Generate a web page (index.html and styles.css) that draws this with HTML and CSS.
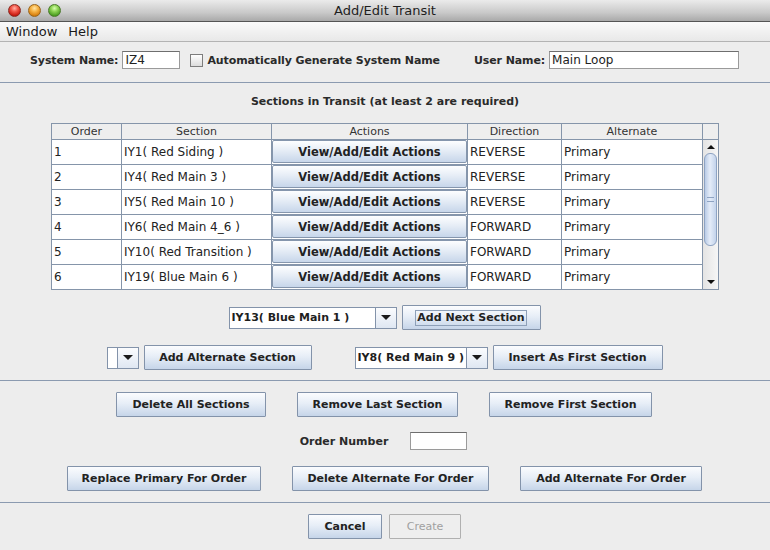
FILE: index.html
```html
<!DOCTYPE html>
<html>
<head>
<meta charset="utf-8">
<title>Add/Edit Transit</title>
<link rel="stylesheet" href="styles.css">
</head>
<body>
<div class="window">
  <div class="titlebar">
    <div class="lights">
      <span class="light red"></span>
      <span class="light yellow"></span>
      <span class="light green"></span>
    </div>
    <div class="title">Add/Edit Transit</div>
  </div>
  <div class="menubar">
    <span class="menu">Window</span>
    <span class="menu">Help</span>
  </div>

  <div class="row row-names">
    <span class="label tight">System Name:</span>
    <span class="field w-sys">IZ4</span>
    <span class="check"></span>
    <span class="label tight">Automatically Generate System Name</span>
    <span class="label tight user-label">User Name:</span>
    <span class="field w-user">Main Loop</span>
  </div>

  <div class="sep sep1"></div>

  <div class="heading">Sections in Transit (at least 2 are required)</div>

  <div class="table">
    <div class="grid">
      <div class="hcell">Order</div>
      <div class="hcell">Section</div>
      <div class="hcell">Actions</div>
      <div class="hcell">Direction</div>
      <div class="hcell">Alternate</div>

      <div class="cell">1</div><div class="cell">IY1( Red Siding )</div><div class="cell act"><span class="abtn">View/Add/Edit Actions</span></div><div class="cell">REVERSE</div><div class="cell">Primary</div>
      <div class="cell">2</div><div class="cell">IY4( Red Main 3 )</div><div class="cell act"><span class="abtn">View/Add/Edit Actions</span></div><div class="cell">REVERSE</div><div class="cell">Primary</div>
      <div class="cell">3</div><div class="cell">IY5( Red Main 10 )</div><div class="cell act"><span class="abtn">View/Add/Edit Actions</span></div><div class="cell">REVERSE</div><div class="cell">Primary</div>
      <div class="cell">4</div><div class="cell">IY6( Red Main 4_6 )</div><div class="cell act"><span class="abtn">View/Add/Edit Actions</span></div><div class="cell">FORWARD</div><div class="cell">Primary</div>
      <div class="cell">5</div><div class="cell">IY10( Red Transition )</div><div class="cell act"><span class="abtn">View/Add/Edit Actions</span></div><div class="cell">FORWARD</div><div class="cell">Primary</div>
      <div class="cell">6</div><div class="cell">IY19( Blue Main 6 )</div><div class="cell act"><span class="abtn">View/Add/Edit Actions</span></div><div class="cell">FORWARD</div><div class="cell">Primary</div>
    </div>
    <div class="scrollcol">
      <div class="hcell scroll-head"></div>
      <div class="track">
        <div class="arrow up"></div>
        <div class="thumb"><span class="grip"></span></div>
        <div class="arrow down"></div>
      </div>
    </div>
  </div>

  <div class="row row-add">
    <span class="combo w-c1"><span class="ctext">IY13( Blue Main 1 )</span><span class="carrow"></span></span>
    <span class="btn w-next"><span class="focus">Add Next Section</span></span>
  </div>

  <div class="row row-alt">
    <span class="combo w-c0"><span class="ctext"></span><span class="carrow"></span></span>
    <span class="btn w-alt">Add Alternate Section</span>
    <span class="combo w-c2 gap-big"><span class="ctext">IY8( Red Main 9 )</span><span class="carrow"></span></span>
    <span class="btn w-first">Insert As First Section</span>
  </div>

  <div class="sep sep2"></div>

  <div class="row row-del">
    <span class="btn w-del">Delete All Sections</span>
    <span class="btn w-last">Remove Last Section</span>
    <span class="btn w-rfirst">Remove First Section</span>
  </div>

  <div class="row row-order">
    <span class="label">Order Number</span>
    <span class="field w-order"></span>
  </div>

  <div class="row row-replace">
    <span class="btn w-rep">Replace Primary For Order</span>
    <span class="btn w-dalt">Delete Alternate For Order</span>
    <span class="btn w-aalt">Add Alternate For Order</span>
  </div>

  <div class="sep sep3"></div>

  <div class="row row-final">
    <span class="btn w-cancel">Cancel</span>
    <span class="btn disabled w-create">Create</span>
  </div>
</div>
</body>
</html>
```

FILE: styles.css
```css
html, body {
  margin: 0;
  padding: 0;
}
body {
  width: 770px;
  height: 550px;
  overflow: hidden;
  background: #ededed;
  font-family: "DejaVu Sans", "Liberation Sans", sans-serif;
  font-size: 11px;
  color: #1e1e1e;
}
.window {
  width: 770px;
  height: 550px;
  background: #ededed;
}
.titlebar {
  height: 21px;
  position: relative;
  background: linear-gradient(#ebebeb, #c9c9c9 60%, #a9a9a9);
  border-bottom: 1px solid #545454;
  display: flex;
  align-items: center;
  justify-content: center;
}
.lights {
  position: absolute;
  left: 8px;
  top: 4px;
  display: flex;
  gap: 7px;
}
.light {
  width: 13px;
  height: 13px;
  border-radius: 50%;
  box-sizing: border-box;
}
.red {
  background: radial-gradient(circle at 50% 30%, #ffb3a8 0, #f2584b 35%, #c71a10 75%, #8a1008 100%);
  border: 1px solid #8a2a22;
}
.yellow {
  background: radial-gradient(circle at 50% 30%, #ffe6a8 0, #f7b548 35%, #d77f0e 75%, #9a5a06 100%);
  border: 1px solid #99651c;
}
.green {
  background: radial-gradient(circle at 50% 30%, #d8ffb0 0, #8ed454 35%, #4c9e22 75%, #2f6e10 100%);
  border: 1px solid #4a7a2a;
}
.title {
  font-size: 13px;
  color: #1e1e1e;
}
.menubar {
  height: 19px;
  background: linear-gradient(#fafafa, #e8e8e8);
  border-bottom: 1px solid #b3b3b3;
  display: flex;
  align-items: center;
  padding-left: 6px;
  gap: 11px;
}
.menu {
  font-size: 13px;
  color: #1a1a1a;
}
.row {
  display: flex;
  align-items: center;
}
.label {
  font-weight: bold;
  color: #2a2a2a;
  white-space: nowrap;
}
.label.tight {
  letter-spacing: -0.1px;
}
.row-names {
  height: 18px;
  margin-top: 9px;
  padding-left: 30px;
}
.row-names .label + .field { margin-left: 4px; }
.field {
  box-sizing: border-box;
  height: 18px;
  background: #fff;
  border: 1px solid #9a9a9a;
  border-top-color: #6e6e6e;
  font-size: 12px;
  line-height: 16px;
  padding-left: 2px;
  color: #222;
  white-space: nowrap;
}
.w-sys { width: 58px; }
.w-user { width: 190px; }
.w-order { width: 57px; margin-left: 22px; }
.check {
  width: 13px;
  height: 13px;
  box-sizing: border-box;
  border: 1px solid #7d7d7d;
  background: linear-gradient(#ffffff, #dcdcdc);
  margin-left: 10px;
  margin-right: 4px;
}
.user-label { margin-left: 34px; }
.sep {
  height: 1px;
  background: #8b9ab0;
}
.sep1 { margin-top: 13px; }
.heading {
  margin-top: 12px;
  height: 14px;
  line-height: 14px;
  text-align: center;
  font-weight: bold;
  color: #2a2a2a;
}
.table {
  margin-top: 14px;
  margin-left: 51px;
  width: 668px;
  box-sizing: border-box;
  border-left: 1px solid #8595aa;
  border-top: 1px solid #8595aa;
  border-right: 1px solid #8595aa;
  display: flex;
}
.grid {
  display: grid;
  grid-template-columns: 70px 150px 196px 94px 141px;
  grid-template-rows: 16px repeat(6, 25px);
}
.hcell {
  box-sizing: border-box;
  border-right: 1px solid #8595aa;
  border-bottom: 1px solid #8595aa;
  background: #eeeeee;
  text-align: center;
  line-height: 15px;
  color: #333;
}
.cell {
  box-sizing: border-box;
  border-right: 1px solid #8595aa;
  border-bottom: 1px solid #8595aa;
  background: #fff;
  line-height: 24px;
  padding-left: 2px;
  font-size: 12px;
  color: #222;
  white-space: nowrap;
}
.cell.act {
  padding: 0;
}
.abtn {
  display: block;
  height: 23px;
  box-sizing: border-box;
  border: 1px solid #8596ad;
  border-radius: 2px;
  background: linear-gradient(#fdfeff, #e6edf6 45%, #c7d6ea);
  text-align: center;
  font-size: 11.5px;
  font-weight: bold;
  line-height: 23px;
  color: #222;
}
.scrollcol {
  width: 15px;
  display: flex;
  flex-direction: column;
}
.scroll-head {
  height: 16px;
  border-right: none;
}
.track {
  height: 150px;
  box-sizing: border-box;
  border-bottom: 1px solid #8595aa;
  background: linear-gradient(90deg, #e4e4e4, #f6f6f6);
  display: flex;
  flex-direction: column;
  align-items: center;
}
.arrow {
  width: 0;
  height: 0;
  border-left: 4px solid transparent;
  border-right: 4px solid transparent;
}
.arrow.up {
  margin-top: 5px;
  border-bottom: 4px solid #111;
}
.arrow.down {
  margin-top: auto;
  margin-bottom: 5px;
  border-top: 4px solid #111;
}
.thumb {
  margin-top: 4px;
  width: 13px;
  height: 93px;
  box-sizing: border-box;
  border: 1px solid #8ea3c2;
  border-radius: 6px;
  background: linear-gradient(90deg, #b9cbe6, #e4ecf8 45%, #c3d3eb);
  display: flex;
  align-items: center;
  justify-content: center;
}
.grip {
  width: 7px;
  height: 3px;
  border-top: 1px solid #8ea3c2;
  border-bottom: 1px solid #8ea3c2;
}
.btn {
  box-sizing: border-box;
  height: 25px;
  border: 1px solid #8393aa;
  border-radius: 1px;
  background: linear-gradient(#fbfcfe, #e7eef7 45%, #c6d5e9);
  display: flex;
  align-items: center;
  justify-content: center;
  font-weight: bold;
  color: #222;
  white-space: nowrap;
}
.btn.disabled {
  background: #eeeeee;
  border-color: #b0b0b0;
  color: #a0a0a0;
  font-weight: normal;
}
.focus {
  outline: 1px solid #8ea0b8;
  outline-offset: 0;
  padding: 0 1px;
  line-height: 14px;
}
.combo {
  box-sizing: border-box;
  height: 22px;
  display: flex;
  border: 1px solid #8393aa;
  background: #fff;
}
.ctext {
  flex: 1;
  font-weight: bold;
  line-height: 20px;
  padding-left: 2px;
  white-space: nowrap;
  overflow: hidden;
}
.carrow {
  width: 20px;
  border-left: 1px solid #8393aa;
  background: linear-gradient(#fbfcfe, #dfe7f2);
  display: flex;
  align-items: center;
  justify-content: center;
}
.carrow::after {
  content: "";
  width: 0;
  height: 0;
  border-left: 5px solid transparent;
  border-right: 5px solid transparent;
  border-top: 5px solid #1a1a1a;
}
.row-add {
  margin-top: 15px;
  height: 25px;
  justify-content: center;
  gap: 5px;
  padding-right: 1px;
}
.w-c1 { width: 168px; }
.w-next { width: 139px; }
.row-alt {
  margin-top: 15px;
  height: 25px;
  justify-content: center;
  gap: 5px;
  padding-right: 1px;
}
.w-c0 { width: 32px; }
.w-alt { width: 168px; }
.w-c2 { width: 133px; }
.gap-big { margin-left: 38px; }
.w-first { width: 170px; }
.sep2 { margin-top: 10px; }
.row-del {
  margin-top: 11px;
  height: 25px;
  justify-content: center;
  gap: 31px;
  padding-right: 2px;
}
.w-del { width: 150px; }
.w-last { width: 161px; }
.w-rfirst { width: 163px; }
.row-order {
  margin-top: 15px;
  height: 18px;
  justify-content: center;
  padding-right: 3px;
}
.row-replace {
  margin-top: 16px;
  height: 25px;
  justify-content: center;
  gap: 31px;
  padding-right: 1px;
}
.w-rep { width: 194px; }
.w-dalt { width: 197px; }
.w-aalt { width: 182px; }
.sep3 { margin-top: 11px; }
.row-final {
  margin-top: 11px;
  height: 25px;
  justify-content: center;
  gap: 7px;
  padding-right: 1px;
}
.w-cancel { width: 74px; }
.w-create { width: 72px; }
```
